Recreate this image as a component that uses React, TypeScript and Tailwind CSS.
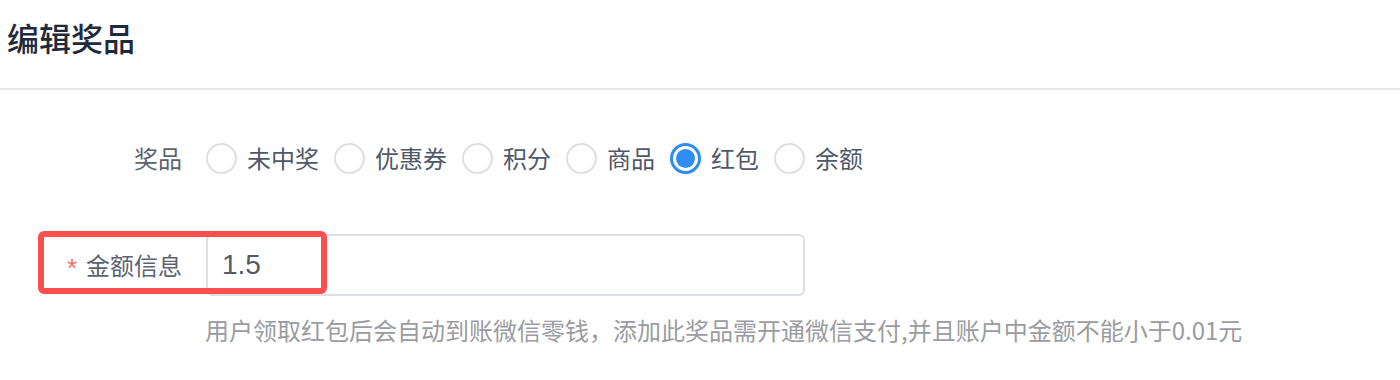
import React, { useState } from 'react';

const prizeTypes = ['未中奖', '优惠券', '积分', '商品', '红包', '余额'];

function EditPrize() {
  const [prize, setPrize] = useState('红包');
  const [amount, setAmount] = useState('1.5');

  return (
    <div
      className="w-[1400px] h-[380px] bg-white overflow-hidden"
      style={{ fontFamily: '"Noto Sans CJK SC", "Noto Sans", sans-serif' }}
    >
      {/* 标题 */}
      <div className="h-[90px] border-b-2 border-[#e8e8e8] pl-[7px] pt-[15px]">
        <h1 className="text-[32px] leading-[44px] font-medium text-[#1f2a3c]">编辑奖品</h1>
      </div>

      <div className="flex flex-col">
        {/* 奖品类型 */}
        <div className="mt-[48px] h-[40px] flex items-center">
          <div className="w-[182px] text-right text-[24px] leading-[40px] text-[#5c6370]">奖品</div>
          <div className="ml-[24px] flex items-center gap-x-[15px]">
            {prizeTypes.map((t) => (
              <label
                key={t}
                className="flex items-center gap-[10px] cursor-pointer"
                onClick={() => setPrize(t)}
              >
                {prize === t ? (
                  <span className="w-[31px] h-[31px] rounded-full border-[3px] border-[#2f8cf0] flex items-center justify-center">
                    <span className="w-[19px] h-[19px] rounded-full bg-[#2f8cf0]" />
                  </span>
                ) : (
                  <span className="w-[31px] h-[31px] rounded-full border-2 border-[#dcdfe6] bg-white" />
                )}
                <span className="text-[24px] leading-[40px] text-[#4f5869]">{t}</span>
              </label>
            ))}
          </div>
        </div>

        {/* 金额信息 */}
        <div className="relative mt-[56px] h-[62px] flex items-center">
          <div className="w-[182px] flex items-center justify-end text-[24px] leading-[40px] text-[#5c6370]">
            <span
              className="text-[#f56c6c] text-[26px] mr-[9px] mt-[6px]"
              style={{ fontFamily: '"Liberation Sans", Arial, sans-serif' }}
            >
              *
            </span>
            金额信息
          </div>
          <input
            value={amount}
            onChange={(e) => setAmount(e.target.value)}
            className="ml-[24px] w-[599px] h-[62px] border-2 border-[#dcdfe6] rounded-[6px] pl-[14px] text-[28px] text-[#555a63] outline-none"
            style={{ fontFamily: '"Liberation Sans", Arial, sans-serif' }}
          />
          {/* 标注框 */}
          <div className="absolute left-[38px] top-[-3px] w-[289px] h-[63px] border-[6px] border-[#f9504f] rounded-[6px] pointer-events-none" />
        </div>

        {/* 提示 */}
        <div className="mt-[17px] ml-[205px] text-[24px] leading-[34px] text-[#9a9ca1]">
          用户领取红包后会自动到账微信零钱，添加此奖品需开通微信支付,并且账户中金额不能小于0.01元
        </div>
      </div>
    </div>
  );
}

export default function App() {
  return <EditPrize />;
}
